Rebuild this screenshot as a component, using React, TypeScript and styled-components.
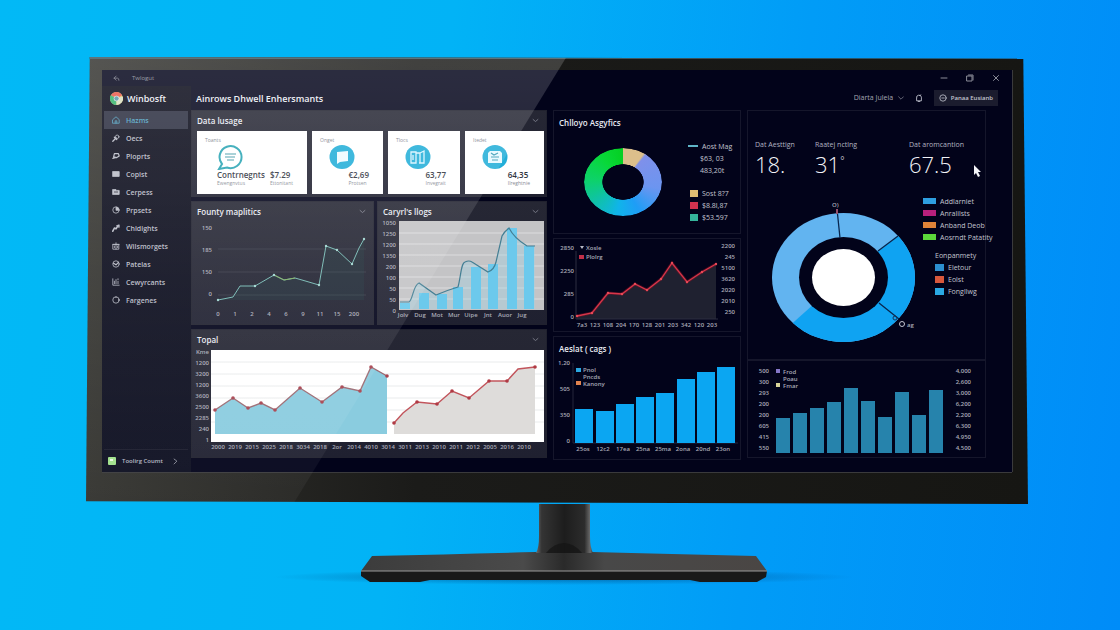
import React from "react";
import styled, { createGlobalStyle } from "styled-components";

const GlobalStyle = createGlobalStyle`
  * { box-sizing: border-box; }
  html, body { margin: 0; padding: 0; }
  body { font-family: "Open Sans", "Noto Sans", sans-serif; background: #00a4f6; }
  button, select { font-family: inherit; margin: 0; padding: 0; border: 0; background: none; color: inherit; }
  h1, h2, p, ul, dl, dd { margin: 0; padding: 0; font-weight: inherit; }
  ul { list-style: none; }
`;

/* ---------- backdrop and monitor ---------- */

const Backdrop = styled.div`
  min-height: 100vh;
  padding-top: 57px;
  overflow: hidden;
  display: grid;
  grid-template-columns: 86fr 942fr 92fr;
  align-content: start;
  background: linear-gradient(97deg, #02b9f6 0%, #02b3f6 38%, #019cf7 68%, #008cf8 100%);
`;

const Monitor = styled.div`
  grid-column: 2;
`;

const Bezel = styled.div`
  position: relative;
  padding: 13px 16px 32px;
  background: linear-gradient(90deg, #33332f, #1b1b19 35%, #161613);
  clip-path: polygon(0.4% 0, 99.5% 0.4%, 100% 100%, 0 99.4%);
  box-shadow: inset 0 2px 0 #3e5860;
`;

const Glare = styled.div`
  position: absolute;
  inset: 0;
  pointer-events: none;
  clip-path: polygon(0 0, 51% 0, 22% 100%, 0 100%);
  background: linear-gradient(180deg, rgba(255, 255, 255, 0.17), rgba(255, 255, 255, 0.09) 50%, rgba(255, 255, 255, 0.04));
`;

const Screen = styled.div`
  display: flex;
  flex-direction: column;
  color: #d6d8e2;
  background: #02031a;
  box-shadow: 0 1px 0 #3a3a3c, 1px 0 0 #3a3a3c;
`;

const StandArt = styled.svg`
  display: block;
  width: 100%;
  height: auto;
  overflow: visible;
`;

/* ---------- window chrome ---------- */

const TitleBar = styled.div`
  display: flex;
  align-items: center;
  gap: 12px;
  height: 16px;
  padding: 0 12px 0 10px;
  font-size: 6px;
  color: #8b8d98;
`;

const WindowControls = styled.div`
  display: flex;
  gap: 18px;
  margin-left: auto;
`;

const IconButton = styled.button`
  display: inline-flex;
  align-items: center;
  justify-content: center;
  width: 8px;
  height: 8px;
`;

const Glyph = styled.svg<{ $size?: number }>`
  display: block;
  flex: none;
  width: ${(p) => p.$size ?? 8}px;
  height: ${(p) => p.$size ?? 8}px;
  fill: none;
  stroke: currentColor;
  stroke-width: 1;
  stroke-linecap: round;
  stroke-linejoin: round;
`;

const Body = styled.div`
  display: flex;
`;

const Sidebar = styled.aside`
  display: flex;
  flex-direction: column;
  flex: 0 0 89px;
  padding: 0 3px 0 2px;
  background: linear-gradient(180deg, #080918, #0c0e20);
`;

const Brand = styled.div`
  display: flex;
  align-items: center;
  gap: 4px;
  height: 25px;
  padding-left: 6px;
  font-size: 9px;
  font-weight: 600;
  color: #eceef4;
`;

const NavItem = styled.a<{ $active?: boolean }>`
  display: flex;
  align-items: center;
  gap: 6px;
  height: 18px;
  padding-left: 8px;
  font-size: 7px;
  font-weight: 600;
  text-decoration: none;
  color: ${(p) => (p.$active ? "#4fa3c4" : "#b9bbc6")};
  background: ${(p) => (p.$active ? "#2b2e40" : "transparent")};
`;

const Account = styled.button`
  display: flex;
  align-items: center;
  gap: 6px;
  margin-top: auto;
  height: 23px;
  padding-left: 4px;
  border-top: 1px solid #1a1b2c;
  font-size: 6px;
  font-weight: 600;
  color: #b4b6c2;
`;

const AccountName = styled.span`
  width: 44px;
  text-align: left;
`;

const Main = styled.main`
  flex: 1;
  min-width: 0;
`;

const Header = styled.header`
  display: flex;
  align-items: center;
  gap: 11px;
  height: 24px;
  padding: 0 14px 0 5px;
`;

const PageTitle = styled.h1`
  margin-right: auto;
  font-size: 9px;
  font-weight: 600;
  color: #eceef4;
`;

const SelectWrap = styled.label`
  display: flex;
  align-items: center;
  color: #a6a8b4;
`;

const Select = styled.select`
  appearance: none;
  width: 44px;
  font-size: 7px;
  line-height: 12px;
`;

const HeaderButton = styled.button`
  display: flex;
  align-items: center;
  gap: 4px;
  height: 16px;
  padding: 0 5px;
  font-size: 6px;
  font-weight: 600;
  color: #c4c6d0;
  background: #1b1c2e;
`;

/* ---------- dashboard ---------- */

const Columns = styled.div`
  display: grid;
  grid-template-columns: minmax(0, 356fr) minmax(0, 188fr) minmax(0, 239fr);
  gap: 6px;
  padding: 0 26px 12px 0;
`;

const Column = styled.div<{ $gap: number }>`
  display: flex;
  flex-direction: column;
  gap: ${(p) => p.$gap}px;
  min-width: 0;
`;

const Pair = styled.div`
  display: grid;
  grid-template-columns: 183fr 170fr;
  gap: 3px;
`;

const Panel = styled.section<{ $tone: "solid" | "outline" }>`
  min-width: 0;
  background: ${(p) => (p.$tone === "solid" ? "linear-gradient(180deg, #262734, #1f2030)" : "transparent")};
  box-shadow: inset 0 0 0 1px ${(p) => (p.$tone === "solid" ? "#20212e" : "#15162b")};
`;

const PanelHead = styled.div<{ $tall?: boolean }>`
  display: flex;
  align-items: center;
  justify-content: space-between;
  height: ${(p) => (p.$tall ? 24 : 20)}px;
  padding: 0 8px 0 6px;
  color: #9597a4;
`;

const PanelTitle = styled.h2`
  font-size: 8px;
  font-weight: 600;
  color: #e9ebf2;
`;

const Cards = styled.div`
  display: grid;
  grid-template-columns: minmax(0, 110fr) minmax(0, 71fr) minmax(0, 72fr) minmax(0, 79fr);
  gap: 5px;
  padding: 1px 3px 3px 6px;
`;

const Card = styled.article`
  display: flex;
  flex-direction: column;
  height: 63px;
  padding: 5px 8px;
  color: #30343e;
  background: #fff;
`;

const CardLabel = styled.p`
  font-size: 5px;
  line-height: 8px;
  color: #7c808a;
`;

const CardIcon = styled.svg<{ $wide?: boolean }>`
  display: block;
  width: 26px;
  height: 26px;
  margin-left: ${(p) => (p.$wide ? 12 : 9)}px;
`;

const CardFigures = styled.div<{ $wide?: boolean }>`
  display: flex;
  justify-content: ${(p) => (p.$wide ? "space-between" : "flex-end")};
  padding: 0 6px 0 ${(p) => (p.$wide ? 12 : 0)}px;
`;

const Figure = styled.div`
  font-size: 8px;
  font-weight: 600;
  line-height: 10px;
`;

const Note = styled.div`
  font-size: 5px;
  font-weight: 400;
  line-height: 6px;
  color: #868a94;
`;

const Chart = styled.svg`
  display: block;
  width: 100%;
  height: auto;
  overflow: visible;
  text { font-size: 6px; font-weight: 600; fill: #a9abb7; }
`;

const Mix = styled.div`
  display: flex;
  justify-content: space-between;
  height: 100px;
  padding: 12px 3px 0 31px;
`;

const MixRing = styled.div`
  width: 78px;
  height: 68px;
  margin-top: 2px;
  border-radius: 50%;
  background: conic-gradient(#dcbf8b 0 36deg, #7f90ea 40deg, #6c95f0 100deg, #1f9df6 150deg, #10b4ea 190deg, #0fc2a8 235deg, #0dd268 275deg, #08d838 320deg, #05cf22);
  mask: radial-gradient(21px 18px at center, transparent 97%, #000 100%);
`;

const MixLegend = styled.ul`
  width: 50px;
`;

const LegendItem = styled.li<{ $space?: number; $indent?: number }>`
  display: flex;
  align-items: center;
  gap: 4px;
  height: 12px;
  margin-top: ${(p) => p.$space ?? 0}px;
  padding-left: ${(p) => p.$indent ?? 0}px;
  font-size: 7px;
  white-space: nowrap;
  color: #c3c5d0;
`;

const Swatch = styled.span<{ $color: string; $w?: number; $h?: number }>`
  flex: none;
  width: ${(p) => p.$w ?? 8}px;
  height: ${(p) => p.$h ?? 7}px;
  background: ${(p) => p.$color};
`;

const Stats = styled.dl`
  position: relative;
  display: grid;
  grid-template-columns: 60fr 94fr 77fr;
  padding: 30px 0 0 8px;
`;

const StatLabel = styled.dt`
  font-size: 7px;
  line-height: 10px;
  white-space: nowrap;
  color: #b2b4c1;
`;

const StatValue = styled.dd`
  font-size: 22px;
  font-weight: 300;
  line-height: 28px;
  color: #f2f3f8;
`;

const Degree = styled.sup`
  font-size: 10px;
  line-height: 0;
`;

const Pointer = styled.svg`
  position: absolute;
  right: 5px;
  bottom: 1px;
  width: 8px;
  height: 12px;
`;

const Share = styled.div`
  display: grid;
  grid-template-columns: minmax(0, 168fr) minmax(0, 63fr);
  height: 182px;
  padding: 12px 0 0 8px;
`;

const ShareLegend = styled.ul`
  padding-top: 5px;
`;

/* ---------- data ---------- */

type Pt = [number, number];
const line = (pts: Pt[]) => pts.map((p) => p.join(",")).join(" ");
const area = (pts: Pt[], base: number) =>
  `${pts[0][0]},${base} ${line(pts)} ${pts[pts.length - 1][0]},${base}`;

const county: Pt[] = [[218, 300], [233, 297], [240, 286], [255, 286], [274, 275], [284, 280], [295, 278], [302, 280], [319, 285], [326, 246], [337, 250], [352, 264], [359, 248], [364, 239]];
const cardLine = "M400 302H409C413 300 413 285 419 283L436 295Q448 290 458 287C461 276 461 263 465 262Q469 260 472 262L488 272Q494 270 496 262L502 236Q504 232 509 228Q514 238 527 246H535";
const totalBlue: Pt[] = [[215, 410], [233, 398], [248, 408], [261, 403], [275, 410], [300, 388], [322, 402], [342, 387], [360, 391], [371, 367], [387, 376]];
const totalRed: Pt[] = [[394, 423], [403, 413], [417, 402], [437, 404], [452, 391], [469, 398], [489, 381], [507, 381], [518, 369], [535, 367]];
const trend: Pt[] = [[577, 315], [592, 312], [608, 292], [622, 293], [635, 283], [647, 289], [661, 278], [672, 262], [687, 281], [702, 271], [716, 263]];

const nav: [string, React.ReactNode][] = [
  ["Hazms", <><path d="M1 4.5 5 1l4 3.5V9H1z" /><path d="M4 9V6h2v3" /></>],
  ["Oecs", <><circle cx="6.5" cy="3.5" r="2.2" /><path d="M5 5 1 9M3 4l3 3" strokeWidth="1.6" /></>],
  ["Ploprts", <><path d="M3 2h5l1 3-3 2-4-1zM1 8l3-1" strokeWidth="1.5" /></>],
  ["Copist", <path d="M1 2h8v6H1z" fill="currentColor" />],
  ["Cerpess", <><path d="M1 2h4l1 1h3v5H1z" fill="currentColor" /><path d="M3 5h4" stroke="#1c1d2b" /></>],
  ["Prpsets", <><circle cx="5" cy="5" r="4" /><path d="M5 5V1.5a3.5 3.5 0 0 1 3.5 3.5z" fill="currentColor" /></>],
  ["Chidights", <><path d="M1 9l2-4 2 1 2-3" strokeWidth="2" /><path d="M6 2l3-1v3z" fill="currentColor" /></>],
  ["Wilsmorgets", <><path d="M1.500 3h7v6h-7zM1 3h8M5 1v8M3 5v2M7 5v2" /></>],
  ["Patelas", <><circle cx="5" cy="5" r="4" /><path d="M2 4l3 2 3-3" strokeWidth="1.500" /></>],
  ["Cewyrcants", <><path d="M1 1v8h8M3 7V4M5 7V2M7.500 7V4M7.500 1v1" /></>],
  ["Fargenes", <><circle cx="5" cy="5" r="4" /><path d="M5 1v1M9 5H8" /></>],
];

const contentBars: Pt[] = [[400, 303], [419, 293], [437, 294], [453, 287], [471, 267], [488, 264], [507, 228], [524, 246]];
const assetBars: Pt[] = [[575, 408], [596, 410], [616, 403], [636, 396], [656, 392], [677, 378], [697, 371], [717, 366]];
const fleetBars = [418, 413, 408, 402, 388, 401, 417, 392, 415, 390];

/* ---------- pieces ---------- */

const Labels = ({ items, x, y, dx = 0, dy = 0, anchor = "middle" }: {
  items: string[]; x: number; y: number; dx?: number; dy?: number; anchor?: "start" | "middle" | "end";
}) => (
  <>
    {items.map((t, i) => (
      <text key={i} x={x + dx * i} y={y + dy * i} textAnchor={anchor}>{t}</text>
    ))}
  </>
);

const Chevron = () => (
  <IconButton type="button" aria-label="Collapse">
    <Glyph viewBox="0 0 10 10" $size={7}><path d="M1.500 3.500 5 6.500 8.500 3.500" /></Glyph>
  </IconButton>
);

const Head = ({ title, tall, menu }: { title: string; tall?: boolean; menu?: boolean }) => (
  <PanelHead $tall={tall}>
    <PanelTitle>{title}</PanelTitle>
    {menu && <Chevron />}
  </PanelHead>
);

const BrandMark = () => (
  <svg width="13" height="13" viewBox="0 0 26 26" aria-hidden="true">
    <circle cx="13" cy="13" r="13" fill="#e9c86a" />
    <path d="M13 13 1.700 6.500A13 13 0 0 1 24.300 6.500z" fill="#ea5a4c" />
    <path d="M13 13 1.700 6.500A13 13 0 0 0 13 26z" fill="#35b56c" />
    <path d="M13 13 13 26A13 13 0 0 0 25.500 9z" fill="#d9dfc0" />
    <circle cx="13" cy="13" r="5.500" fill="#f4f6f4" />
    <circle cx="13" cy="13" r="4.500" fill="#5b95a8" />
  </svg>
);

const Disc = ({ children }: { children: React.ReactNode }) => (
  <CardIcon viewBox="0 0 26 26">
    <ellipse cx="13" cy="13" rx="12.500" ry="12" fill="#22aed8" />
    {children}
  </CardIcon>
);

/* ---------- page ---------- */

export default function App() {
  return (
    <>
      <GlobalStyle />
      <Backdrop>
        <Monitor>
          <Bezel>
            <Screen>
              <TitleBar>
                <IconButton type="button" aria-label="Back">
                  <Glyph viewBox="0 0 10 10" $size={7}><path d="M4.500 1.500 1.500 4.500l3 3M1.500 4.500h5q2 0 2 3" /></Glyph>
                </IconButton>
                <span>Twlogut</span>
                <WindowControls>
                  <IconButton type="button" aria-label="Minimise"><Glyph viewBox="0 0 8 8"><path d="M1 4h6" /></Glyph></IconButton>
                  <IconButton type="button" aria-label="Restore"><Glyph viewBox="0 0 8 8"><path d="M1 2h5v5H1zM2.500 1H7v5" /></Glyph></IconButton>
                  <IconButton type="button" aria-label="Close"><Glyph viewBox="0 0 8 8"><path d="M1.500 1.500l5 5M6.500 1.500l-5 5" /></Glyph></IconButton>
                </WindowControls>
              </TitleBar>
              <Body>
                <Sidebar>
                  <Brand><BrandMark />Winbosft</Brand>
                  <nav>
                    {nav.map(([label, icon], i) => (
                      <NavItem key={label} href="#" $active={i === 0}>
                        <Glyph viewBox="0 0 10 10">{icon}</Glyph>
                        {label}
                      </NavItem>
                    ))}
                  </nav>
                  <Account type="button">
                    <svg width="8" height="8" viewBox="0 0 8 8" aria-hidden="true">
                      <rect width="8" height="8" rx="1" fill="#9fe08a" />
                      <path d="M2 2h3v2H2z" fill="#e9f8df" />
                    </svg>
                    <AccountName>Toolirg Coumt</AccountName>
                    <Glyph viewBox="0 0 10 10" $size={7}><path d="M3 1.500l4 3-4 4" /></Glyph>
                  </Account>
                </Sidebar>

                <Main>
                  <Header>
                    <PageTitle>Ainrows Dhwell Enhersmants</PageTitle>
                    <SelectWrap>
                      <Select aria-label="Range" defaultValue="a"><option value="a">Diarta Juleia</option></Select>
                      <Glyph viewBox="0 0 10 10" $size={6}><path d="M1 3l4 4 4-4" /></Glyph>
                    </SelectWrap>
                    <IconButton type="button" aria-label="Alerts">
                      <Glyph viewBox="0 0 10 10"><path d="M2 8V5a3 3 0 0 1 6-1v4zM4 9.500h2M6 2l1-1" /></Glyph>
                    </IconButton>
                    <HeaderButton type="button">
                      <Glyph viewBox="0 0 10 10"><circle cx="5" cy="5" r="4" /><path d="M3.500 5h3" /></Glyph>
                      Panaa Eusianb
                    </HeaderButton>
                  </Header>

                  <Columns>
                    <Column $gap={4}>
                      <Panel $tone="solid">
                        <Head title="Data lusage" menu />
                        <Cards>
                          <Card>
                            <CardLabel>Toants</CardLabel>
                            <CardIcon $wide viewBox="0 0 26 26">
                              <path d="M5 20A11 11 0 1 1 10 23.500L2 25z" fill="none" stroke="#2aa5b4" strokeWidth="2" />
                              <path d="M8 10h11M8 13h10M10 16h7" stroke="#3f98a6" strokeWidth="1.200" />
                            </CardIcon>
                            <CardFigures $wide>
                              <Figure>Contrnegnts<Note>Ewengnvtus</Note></Figure>
                              <Figure>$7.29<Note>Ettonitant</Note></Figure>
                            </CardFigures>
                          </Card>
                          <Card>
                            <CardLabel>Onget</CardLabel>
                            <Disc><path d="M8 8l11-1v10l-8 1-3 2z" fill="#effbff" /></Disc>
                            <CardFigures><Figure>€2,69<Note>Protsen</Note></Figure></CardFigures>
                          </Card>
                          <Card>
                            <CardLabel>Tlocs</CardLabel>
                            <Disc>
                              <path d="M6 8h5v11H6zM11 9h4v10M15 9l4-2v12h-5M8 11v5" fill="none" stroke="#d8f5ff" strokeWidth="1.300" />
                            </Disc>
                            <CardFigures><Figure>63,77<Note>Invegrait</Note></Figure></CardFigures>
                          </Card>
                          <Card>
                            <CardLabel>Itedet</CardLabel>
                            <Disc>
                              <path d="M6 9l2-2h10l2 2v10H6z" fill="#e6f9ff" />
                              <path d="M9 9l3 2 4-2M9 13h8M10 16h6" stroke="#3a9bb5" fill="none" strokeWidth="1.200" />
                            </Disc>
                            <CardFigures><Figure>64,35<Note>Ilreghtnie</Note></Figure></CardFigures>
                          </Card>
                        </Cards>
                      </Panel>

                      <Pair>
                        <Panel $tone="solid">
                          <Head title="Founty maplitics" menu />
                          <Chart viewBox="191 221 183 104" role="img" aria-label="Line chart">
                            {[249, 272, 295].map((y) => <path key={y} d={`M218 ${y}H366`} stroke="#353744" />)}
                            <Labels items={["150", "185", "150", "0"]} x={212} y={230} dy={22} anchor="end" />
                            <Labels items={["0", "1", "2", "4", "6", "9", "11", "15", "200"]} x={218} y={316} dx={17} />
                            <polygon points={area(county, 300)} fill="#1e6b66" opacity="0.12" />
                            <polyline points={line(county)} fill="none" stroke="#74b8b2" strokeWidth="1" />
                            <path d="M274 275l10 5 11-2" fill="none" stroke="#7fae5e" />
                            {[0, 3, 4, 8, 9, 10, 11, 13].map((i) => <circle key={i} cx={county[i][0]} cy={county[i][1]} r="1.200" fill="#9fd4cf" />)}
                          </Chart>
                        </Panel>
                        <Panel $tone="solid">
                          <Head title="Caryrl's llogs" menu />
                          <Chart viewBox="377 221 170 104" role="img" aria-label="Bar and line chart">
                            <rect x="399" y="221" width="145" height="89" fill="#c4c4c6" />
                            {[233, 244, 255, 266, 277, 288, 299].map((y) => <path key={y} d={`M399 ${y}H544`} stroke="#dcdcde" />)}
                            <path d={`${cardLine}V309H400z`} fill="#9fd3e6" opacity="0.35" />
                            {contentBars.map(([x, y]) => <rect key={x} x={x} y={y} width="10" height={309 - y} fill="#6cc9ec" />)}
                            <path d={cardLine} fill="none" stroke="#447f94" strokeWidth="1.200" />
                            <Labels items={["1050", "1250", "1200", "1350", "200", "100", "50", "50", "0"]} x={396} y={225} dy={11} anchor="end" />
                            <Labels items={["Jolv", "Dug", "Mot", "Mur", "Uipe", "Jnt", "Auor", "Jug"]} x={403} y={317} dx={17} />
                          </Chart>
                        </Panel>
                      </Pair>

                      <Panel $tone="solid">
                        <Head title="Topal" menu />
                        <Chart viewBox="191 349 356 109" role="img" aria-label="Area chart">
                          <rect x="211" y="350" width="333" height="92" fill="#fff" />
                          {[362, 374, 386, 398, 410, 422].map((y) => <path key={y} d={`M211 ${y}H544`} stroke="#e9ebec" />)}
                          <polygon points={area(totalBlue, 434)} fill="#8accdf" />
                          <polyline points={line(totalBlue)} fill="none" stroke="#9c6a72" strokeWidth="1.400" />
                          {totalBlue.map(([x, y]) => <circle key={x} cx={x} cy={y} r="1.800" fill="#a8434f" />)}
                          <polygon points={area(totalRed, 434)} fill="#dedcda" />
                          <polyline points={line(totalRed)} fill="none" stroke="#c2555c" strokeWidth="1.400" />
                          {totalRed.filter((_, i) => i !== 1 && i !== 8).map(([x, y]) => <circle key={x} cx={x} cy={y} r="1.800" fill="#b03a44" />)}
                          <Labels items={["Kme", "1200", "3200", "1200", "3600", "2500", "2285", "240", "1"]} x={209} y={354} dy={11} anchor="end" />
                          <Labels items={["2000", "2019", "2015", "2025", "2018", "3034", "2018", "2or", "2014", "4010", "3014", "3011", "2013", "2010", "2011", "2012", "2005", "2016", "2010"]} x={218} y={449} dx={17} />
                        </Chart>
                      </Panel>
                    </Column>

                    <Column $gap={4}>
                      <Panel $tone="outline">
                        <Head title="Chlloyo Asgyfics" tall />
                        <Mix>
                          <MixRing role="img" aria-label="Share ring" />
                          <MixLegend>
                            <LegendItem $space={-6}><Swatch $color="#5fb5c8" $w={10} $h={2} />Aost Mag</LegendItem>
                            <LegendItem $indent={12}>$63, 03</LegendItem>
                            <LegendItem $indent={12}>483,20t</LegendItem>
                            <LegendItem $space={11} $indent={2}><Swatch $color="#e0be72" />Sost 8?7</LegendItem>
                            <LegendItem $indent={2}><Swatch $color="#d0324f" />$8.8l,87</LegendItem>
                            <LegendItem $indent={2}><Swatch $color="#35b59b" />$53.597</LegendItem>
                          </MixLegend>
                        </Mix>
                      </Panel>
                      <Panel $tone="outline">
                        <Chart viewBox="553 237 188 94" role="img" aria-label="Trend chart">
                          <polygon points={area(trend, 318)} fill="#1f2130" />
                          <path d="M576 250V318H718" fill="none" stroke="#2c2e40" />
                          <polyline points={line(trend)} fill="none" stroke="#7d1426" strokeWidth="3" opacity="0.5" />
                          <polyline points={line(trend)} fill="none" stroke="#d8364a" strokeWidth="1.300" />
                          {trend.map(([x, y]) => <circle key={x} cx={x} cy={y} r="1.200" fill="#e84a58" />)}
                          <path d="M580 245h4l-2 3z" fill="#b8bac6" />
                          <rect x="579" y="254" width="5" height="4" fill="#c02f48" />
                          <Labels items={["Xosle", "Plolrg"]} x={586} y={249} dy={9} anchor="start" />
                          <Labels items={["2850", "2250", "285", "0"]} x={574} y={249} dy={23} anchor="end" />
                          <Labels items={["2200", "245", "5100", "3620", "2020", "2010", "250"]} x={735} y={247} dy={11} anchor="end" />
                          <Labels items={["7a3", "123", "108", "204", "170", "128", "201", "203", "342", "120", "203"]} x={582} y={326} dx={13} />
                        </Chart>
                      </Panel>
                      <Panel $tone="outline">
                        <Head title="Aeslat  ( cags )" tall />
                        <Chart viewBox="553 359 188 100" role="img" aria-label="Bar chart">
                          <path d="M573 362V442H738" fill="none" stroke="#24263a" />
                          {assetBars.map(([x, y]) => <rect key={x} x={x} y={y} width="18" height={442 - y} fill="#0ba6f2" />)}
                          <rect x="576" y="367" width="5" height="4" fill="#2aa8e0" />
                          <rect x="576" y="380" width="5" height="4" fill="#e0824e" />
                          <Labels items={["Pnol", "Pncds", "Kanony"]} x={583} y={371} dy={7} anchor="start" />
                          <Labels items={["1,20", "505", "350", "0"]} x={570} y={364} dy={26} anchor="end" />
                          <Labels items={["25os", "12c2", "17ea", "25na", "25ma", "2ona", "20nd", "23on"]} x={583} y={450} dx={20} />
                        </Chart>
                      </Panel>
                    </Column>

                    <Column $gap={0}>
                      <Panel $tone="outline">
                        <Stats>
                          <div><StatLabel>Dat Aesttign</StatLabel><StatValue>18.</StatValue></div>
                          <div><StatLabel>Raatej nctlng</StatLabel><StatValue>31<Degree>°</Degree></StatValue></div>
                          <div><StatLabel>Dat aromcantion</StatLabel><StatValue>67.5</StatValue></div>
                          <Pointer viewBox="0 0 8 12"><path d="M1 0v10l2-2 2 4 2-1-2-4h3z" fill="#f4f4f8" /></Pointer>
                        </Stats>
                        <Share>
                          <Chart viewBox="755 190 168 166" role="img" aria-label="Ring chart">
                            <clipPath id="ringEdge"><ellipse cx="843.500" cy="277.500" rx="71.500" ry="64.500" /></clipPath>
                            <g clipPath="url(#ringEdge)">
                              <rect x="770" y="210" width="148" height="136" fill="#62b4f0" />
                              <path d="M843 278L918 221V346H767z" fill="#0fa3f2" />
                            </g>
                            <ellipse cx="843.500" cy="277.500" rx="44.500" ry="40.500" fill="#02031a" />
                            <ellipse cx="843.500" cy="277.500" rx="31.500" ry="28.500" fill="#fff" />
                            <path d="M837 209l3 29M898 236l-20 15M879 303l20 16" stroke="#08264e" strokeWidth="1.300" />
                            <path d="M837 209v5" stroke="#93506c" strokeWidth="2" />
                            <circle cx="895" cy="318" r="2" fill="none" stroke="#16335a" />
                            <text x="832" y="207">O)</text>
                            <circle cx="902" cy="324" r="2.500" fill="none" stroke="#c3c5d0" />
                            <text x="907" y="327">ag</text>
                          </Chart>
                          <ShareLegend>
                            <LegendItem><Swatch $color="#2e9fe0" $w={13} $h={6} />Addlarniet</LegendItem>
                            <LegendItem><Swatch $color="#b8207c" $w={13} $h={6} />Anralilsts</LegendItem>
                            <LegendItem><Swatch $color="#e08338" $w={13} $h={6} />Anband Deob</LegendItem>
                            <LegendItem><Swatch $color="#5bd83a" $w={13} $h={6} />Aosrndt Patatity</LegendItem>
                            <LegendItem $space={6} $indent={12}>Eonpanmety</LegendItem>
                            <LegendItem $indent={12}><Swatch $color="#2c8fd0" $w={9} />Eletour</LegendItem>
                            <LegendItem $indent={12}><Swatch $color="#d8583c" $w={9} />Eolst</LegendItem>
                            <LegendItem $indent={12}><Swatch $color="#2aa9e4" $w={9} />Fongllwg</LegendItem>
                          </ShareLegend>
                        </Share>
                      </Panel>
                      <Panel $tone="outline">
                        <Chart viewBox="747 360 239 98" role="img" aria-label="Bar chart">
                          {fleetBars.map((y, i) => <rect key={i} x={776 + 17 * i} y={y} width="14" height={453 - y} fill="#2683ac" />)}
                          <rect x="776" y="369" width="4" height="4" fill="#8577c8" />
                          <rect x="776" y="383" width="4" height="4" fill="#d8d49a" />
                          <Labels items={["Frod", "Poau", "Fmar"]} x={783} y={374} dy={7} anchor="start" />
                          <Labels items={["500", "300", "293", "200", "200", "605", "415", "550"]} x={769} y={373} dy={11} anchor="end" />
                          <Labels items={["4,000", "2,600", "3,000", "6,200", "2,200", "6,300", "4,950", "4,500"]} x={971} y={373} dy={11} anchor="end" />
                        </Chart>
                      </Panel>
                    </Column>
                  </Columns>
                </Main>
              </Body>
            </Screen>
            <Glare />
          </Bezel>

          <StandArt viewBox="86 504 942 84" role="img" aria-label="Monitor stand">
            <defs>
              <linearGradient id="neck">
                <stop offset="0" stopColor="#6a6a6a" />
                <stop offset="0.100" stopColor="#343434" />
                <stop offset="0.500" stopColor="#1d1d1d" />
                <stop offset="0.850" stopColor="#2c2c2c" />
                <stop offset="0.950" stopColor="#6b6b6b" />
                <stop offset="1" stopColor="#3a3a3a" />
              </linearGradient>
              <linearGradient id="foot">
                <stop offset="0" stopColor="#3c3c3c" />
                <stop offset="0.400" stopColor="#4a4a4a" />
                <stop offset="0.500" stopColor="#2a2a2a" />
                <stop offset="0.600" stopColor="#484848" />
                <stop offset="1" stopColor="#4a4644" />
              </linearGradient>
              <radialGradient id="shade">
                <stop offset="0" stopColor="#034a86" stopOpacity="0.700" />
                <stop offset="1" stopColor="#034a86" stopOpacity="0" />
              </radialGradient>
            </defs>
            <ellipse cx="564" cy="577" rx="290" ry="8" fill="url(#shade)" />
            <path d="M372 556Q460 554 536 552H592Q670 554 756 556L767 571H361z" fill="url(#foot)" />
            <path d="M361 571H767L766 577 757 582H700L690 580H430L420 582H370L361 576z" fill="#191919" />
            <path d="M361 571H767" stroke="#9a9a9a" strokeWidth="1" />
            <path d="M539 504H590V536Q590 548 593 553H536Q539 548 539 536z" fill="url(#neck)" />
            <path d="M546 553Q554 543 564 543T582 553z" fill="#141414" opacity="0.700" />
          </StandArt>
        </Monitor>
      </Backdrop>
    </>
  );
}
